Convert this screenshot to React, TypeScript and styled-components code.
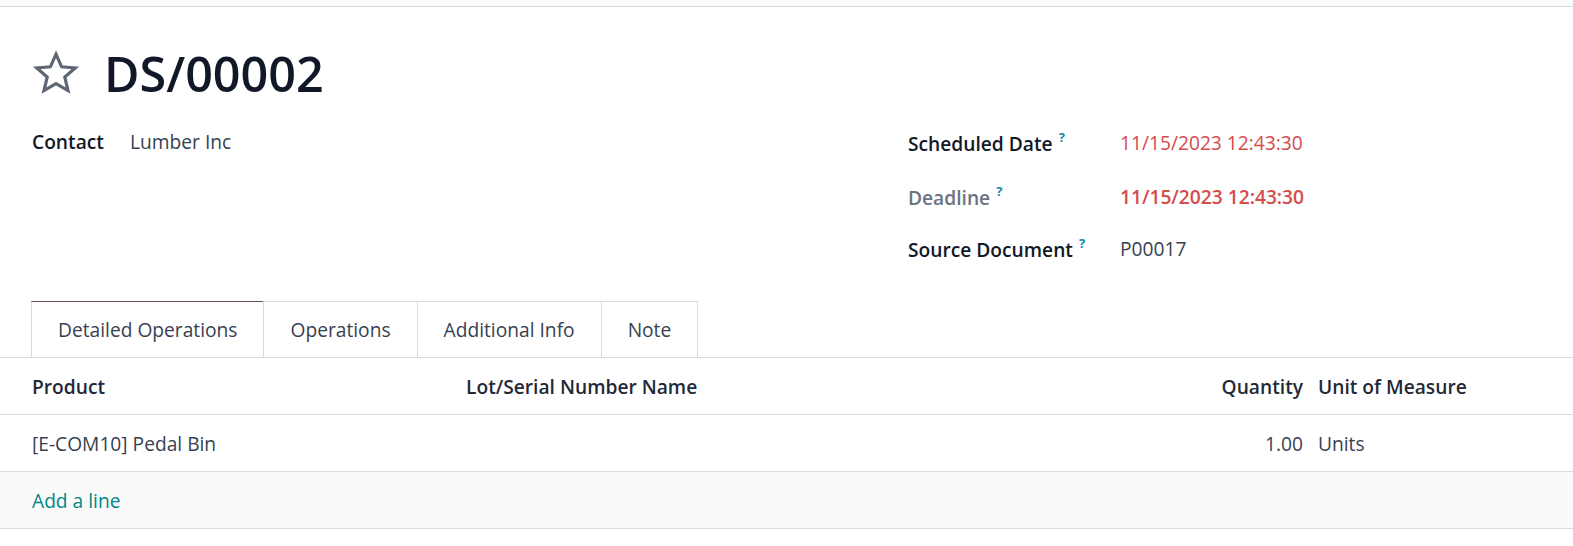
import styled, { createGlobalStyle } from "styled-components";

const GlobalStyle = createGlobalStyle`
  body {
    margin: 0;
    background: #ffffff;
    font-family: "Open Sans", "Noto Sans", sans-serif;
    color: #374151;
  }
`;

const TopStrip = styled.div`
  height: 6px;
  background: #f9fafb;
  border-bottom: 1px solid #d8dadd;
`;

const Sheet = styled.div`
  display: flex;
  flex-direction: column;
`;

const TitleRow = styled.div`
  display: flex;
  align-items: center;
  gap: 24px;
  padding: 32px 32px 0;
  height: 68px;
`;

const Title = styled.h1`
  margin: 0;
  font-size: 48.5px;
  font-weight: 600;
  color: #111827;
`;

const StarButton = styled.span`
  display: flex;
  width: 48px;
  height: 48px;
  color: #5f6673;
`;

const FieldGrid = styled.div`
  display: grid;
  grid-template-columns: 876px 1fr;
  padding: 8px 32px 0;
  height: 186px;
`;

const FieldGroup = styled.div`
  display: flex;
  flex-direction: column;
`;

const FieldRow = styled.div<{ labelWidth: number; height: number }>`
  display: grid;
  grid-template-columns: ${({ labelWidth }) => labelWidth}px 1fr;
  align-items: center;
  height: ${({ height }) => height}px;
  font-size: 19.2px;
`;

const Label = styled.span<{ muted?: boolean }>`
  font-weight: 600;
  color: ${({ muted }) => (muted ? "#6b7280" : "#111827")};
`;

const Help = styled.sup`
  color: #0d8aa8;
  font-size: 13px;
  font-weight: 700;
  margin-left: 6px;
  vertical-align: 9px;
`;

const Value = styled.span<{ tone?: "danger" | "dangerBold" }>`
  color: ${({ tone }) => (tone ? "#d44c4c" : "#374151")};
  font-weight: ${({ tone }) => (tone === "dangerBold" ? 600 : 400)};
`;

const TabBar = styled.div`
  display: flex;
  padding: 0 32px;
  border-bottom: 1px solid #d8dadd;
  height: 56px;
`;

const Tab = styled.div<{ active?: boolean }>`
  display: flex;
  align-items: center;
  padding: 0 26px;
  font-size: 19.2px;
  color: #374151;
  border: 1px solid #d8dadd;
  border-top-color: ${({ active }) => (active ? "#714b67" : "#d8dadd")};
  border-bottom: none;
  margin-left: -1px;
`;

const TableRow = styled.div<{ head?: boolean; footer?: boolean }>`
  display: grid;
  grid-template-columns: 466px 1fr 145px 262px;
  align-items: center;
  height: 56px;
  border-bottom: 1px solid #d8dadd;
  background: ${({ footer }) => (footer ? "#fafafa" : "#ffffff")};
  font-size: 19.2px;
  font-weight: ${({ head }) => (head ? 600 : 400)};
  color: ${({ head }) => (head ? "#1f2937" : "#374151")};
`;

const Cell = styled.div<{ kind?: "first" | "number" | "unit" }>`
  text-align: ${({ kind }) => (kind === "number" ? "right" : "left")};
  padding-left: ${({ kind }) => (kind === "first" ? "32px" : kind === "unit" ? "7px" : "0")};
  padding-right: ${({ kind }) => (kind === "number" ? "8px" : "0")};
`;

const AddLine = styled.span`
  color: #018786;
`;

const StarIcon = () => (
  <svg viewBox="0 0 24 24" width="48" height="48" fill="none" stroke="currentColor" strokeWidth="1.6" strokeLinejoin="miter">
    <path d="M12 2.6l2.8 6.3 6.8.6-5.2 4.5 1.6 6.8L12 17.3l-6 3.5 1.6-6.8-5.2-4.5 6.8-.6z" />
  </svg>
);

const rightFields = [
  { label: "Scheduled Date", value: "11/15/2023 12:43:30", tone: "danger" as const, height: 55 },
  { label: "Deadline", value: "11/15/2023 12:43:30", tone: "dangerBold" as const, muted: true, height: 52 },
  { label: "Source Document", value: "P00017", height: 52 },
];

export default function App() {
  return (
    <>
      <GlobalStyle />
      <TopStrip />
      <Sheet>
        <TitleRow>
          <StarButton>
            <StarIcon />
          </StarButton>
          <Title>DS/00002</Title>
        </TitleRow>
        <FieldGrid>
          <FieldGroup>
            <FieldRow labelWidth={98} height={52}>
              <Label>Contact</Label>
              <Value>Lumber Inc</Value>
            </FieldRow>
          </FieldGroup>
          <FieldGroup>
            {rightFields.map((f) => (
              <FieldRow key={f.label} labelWidth={212} height={f.height}>
                <Label muted={f.muted}>
                  {f.label}
                  <Help>?</Help>
                </Label>
                <Value tone={f.tone}>{f.value}</Value>
              </FieldRow>
            ))}
          </FieldGroup>
        </FieldGrid>
        <TabBar>
          <Tab active>Detailed Operations</Tab>
          <Tab>Operations</Tab>
          <Tab>Additional Info</Tab>
          <Tab>Note</Tab>
        </TabBar>
        <TableRow head>
          <Cell kind="first">Product</Cell>
          <Cell>Lot/Serial Number Name</Cell>
          <Cell kind="number">Quantity</Cell>
          <Cell kind="unit">Unit of Measure</Cell>
        </TableRow>
        <TableRow>
          <Cell kind="first">[E-COM10] Pedal Bin</Cell>
          <Cell />
          <Cell kind="number">1.00</Cell>
          <Cell kind="unit">Units</Cell>
        </TableRow>
        <TableRow footer>
          <Cell kind="first">
            <AddLine>Add a line</AddLine>
          </Cell>
        </TableRow>
      </Sheet>
    </>
  );
}
